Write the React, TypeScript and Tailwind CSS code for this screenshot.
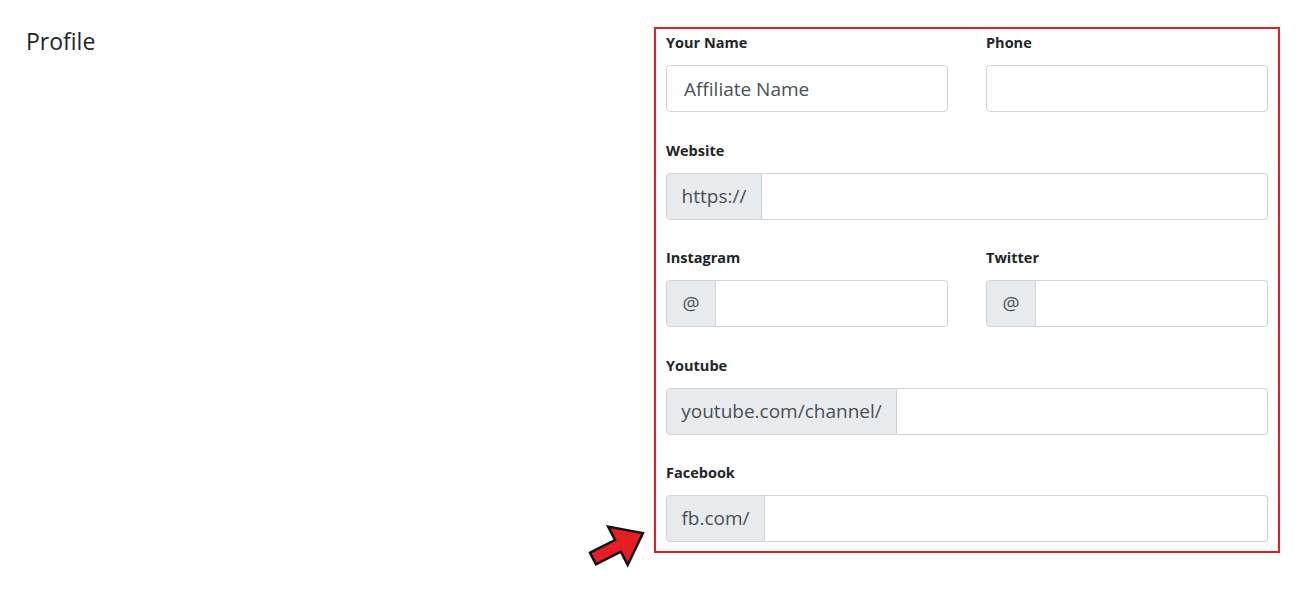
import React from 'react';

const font = { fontFamily: '"Open Sans", "Noto Sans", Arial, sans-serif' };

interface FieldProps {
  label: string;
  prefix?: string;
  prefixWidth?: string;
  value?: string;
  wide?: boolean;
}

const Field: React.FC<FieldProps> = ({ label, prefix, prefixWidth, value, wide }) => (
  <div className={wide ? 'col-span-2' : ''}>
    <div className="h-[22px] text-[14.5px] font-bold leading-[24px] text-[#212529]">{label}</div>
    <div className="mt-[12px] flex h-[47px]">
      {prefix && (
        <div
          className={`flex shrink-0 items-center justify-center rounded-l-[4px] border border-[#ced4da] bg-[#e9ecef] text-[19px] text-[#495057] ${prefixWidth}`}
        >
          {prefix}
        </div>
      )}
      <input
        readOnly
        defaultValue={value}
        className={`h-full min-w-0 flex-1 border border-[#ced4da] bg-white px-[17px] text-[19px] text-[#495057] outline-none ${
          prefix ? 'rounded-r-[4px] border-l-0' : 'rounded-[4px]'
        }`}
        style={font}
      />
    </div>
  </div>
);

const Arrow = () => (
  <svg className="absolute left-[580px] top-[520px]" width="80" height="60" viewBox="0 0 80 60">
    <g transform="translate(13 38.5) rotate(-27)">
      <polygon
        points="0,-6.5 28,-6.5 28,-21.5 56,0 28,21.5 28,6.5 0,6.5"
        fill="#e31e24"
        stroke="#111"
        strokeWidth="2.5"
        strokeLinejoin="miter"
      />
    </g>
  </svg>
);

export default function App() {
  return (
    <div className="relative flex h-[590px] w-[1295px] bg-white" style={font}>
      <div className="flex-1 pl-[26px] pt-[25px]">
        <h2 className="text-[23px] leading-[32px] text-[#212529]">Profile</h2>
      </div>
      <div className="mr-[15px] mt-[27px] h-[526px] w-[626px] border-2 border-[#e31e24] pb-[9px] pl-[10px] pr-[10px] pt-[2px]">
        <div className="grid grid-cols-2 gap-x-[38px] gap-y-[26.5px]">
          <Field label="Your Name" value="Affiliate Name" />
          <Field label="Phone" />
          <Field label="Website" prefix="https://" prefixWidth="w-[96px]" wide />
          <Field label="Instagram" prefix="@" prefixWidth="w-[50px]" />
          <Field label="Twitter" prefix="@" prefixWidth="w-[50px]" />
          <Field label="Youtube" prefix="youtube.com/channel/" prefixWidth="w-[231px]" wide />
          <Field label="Facebook" prefix="fb.com/" prefixWidth="w-[99px]" wide />
        </div>
      </div>
      <Arrow />
    </div>
  );
}
